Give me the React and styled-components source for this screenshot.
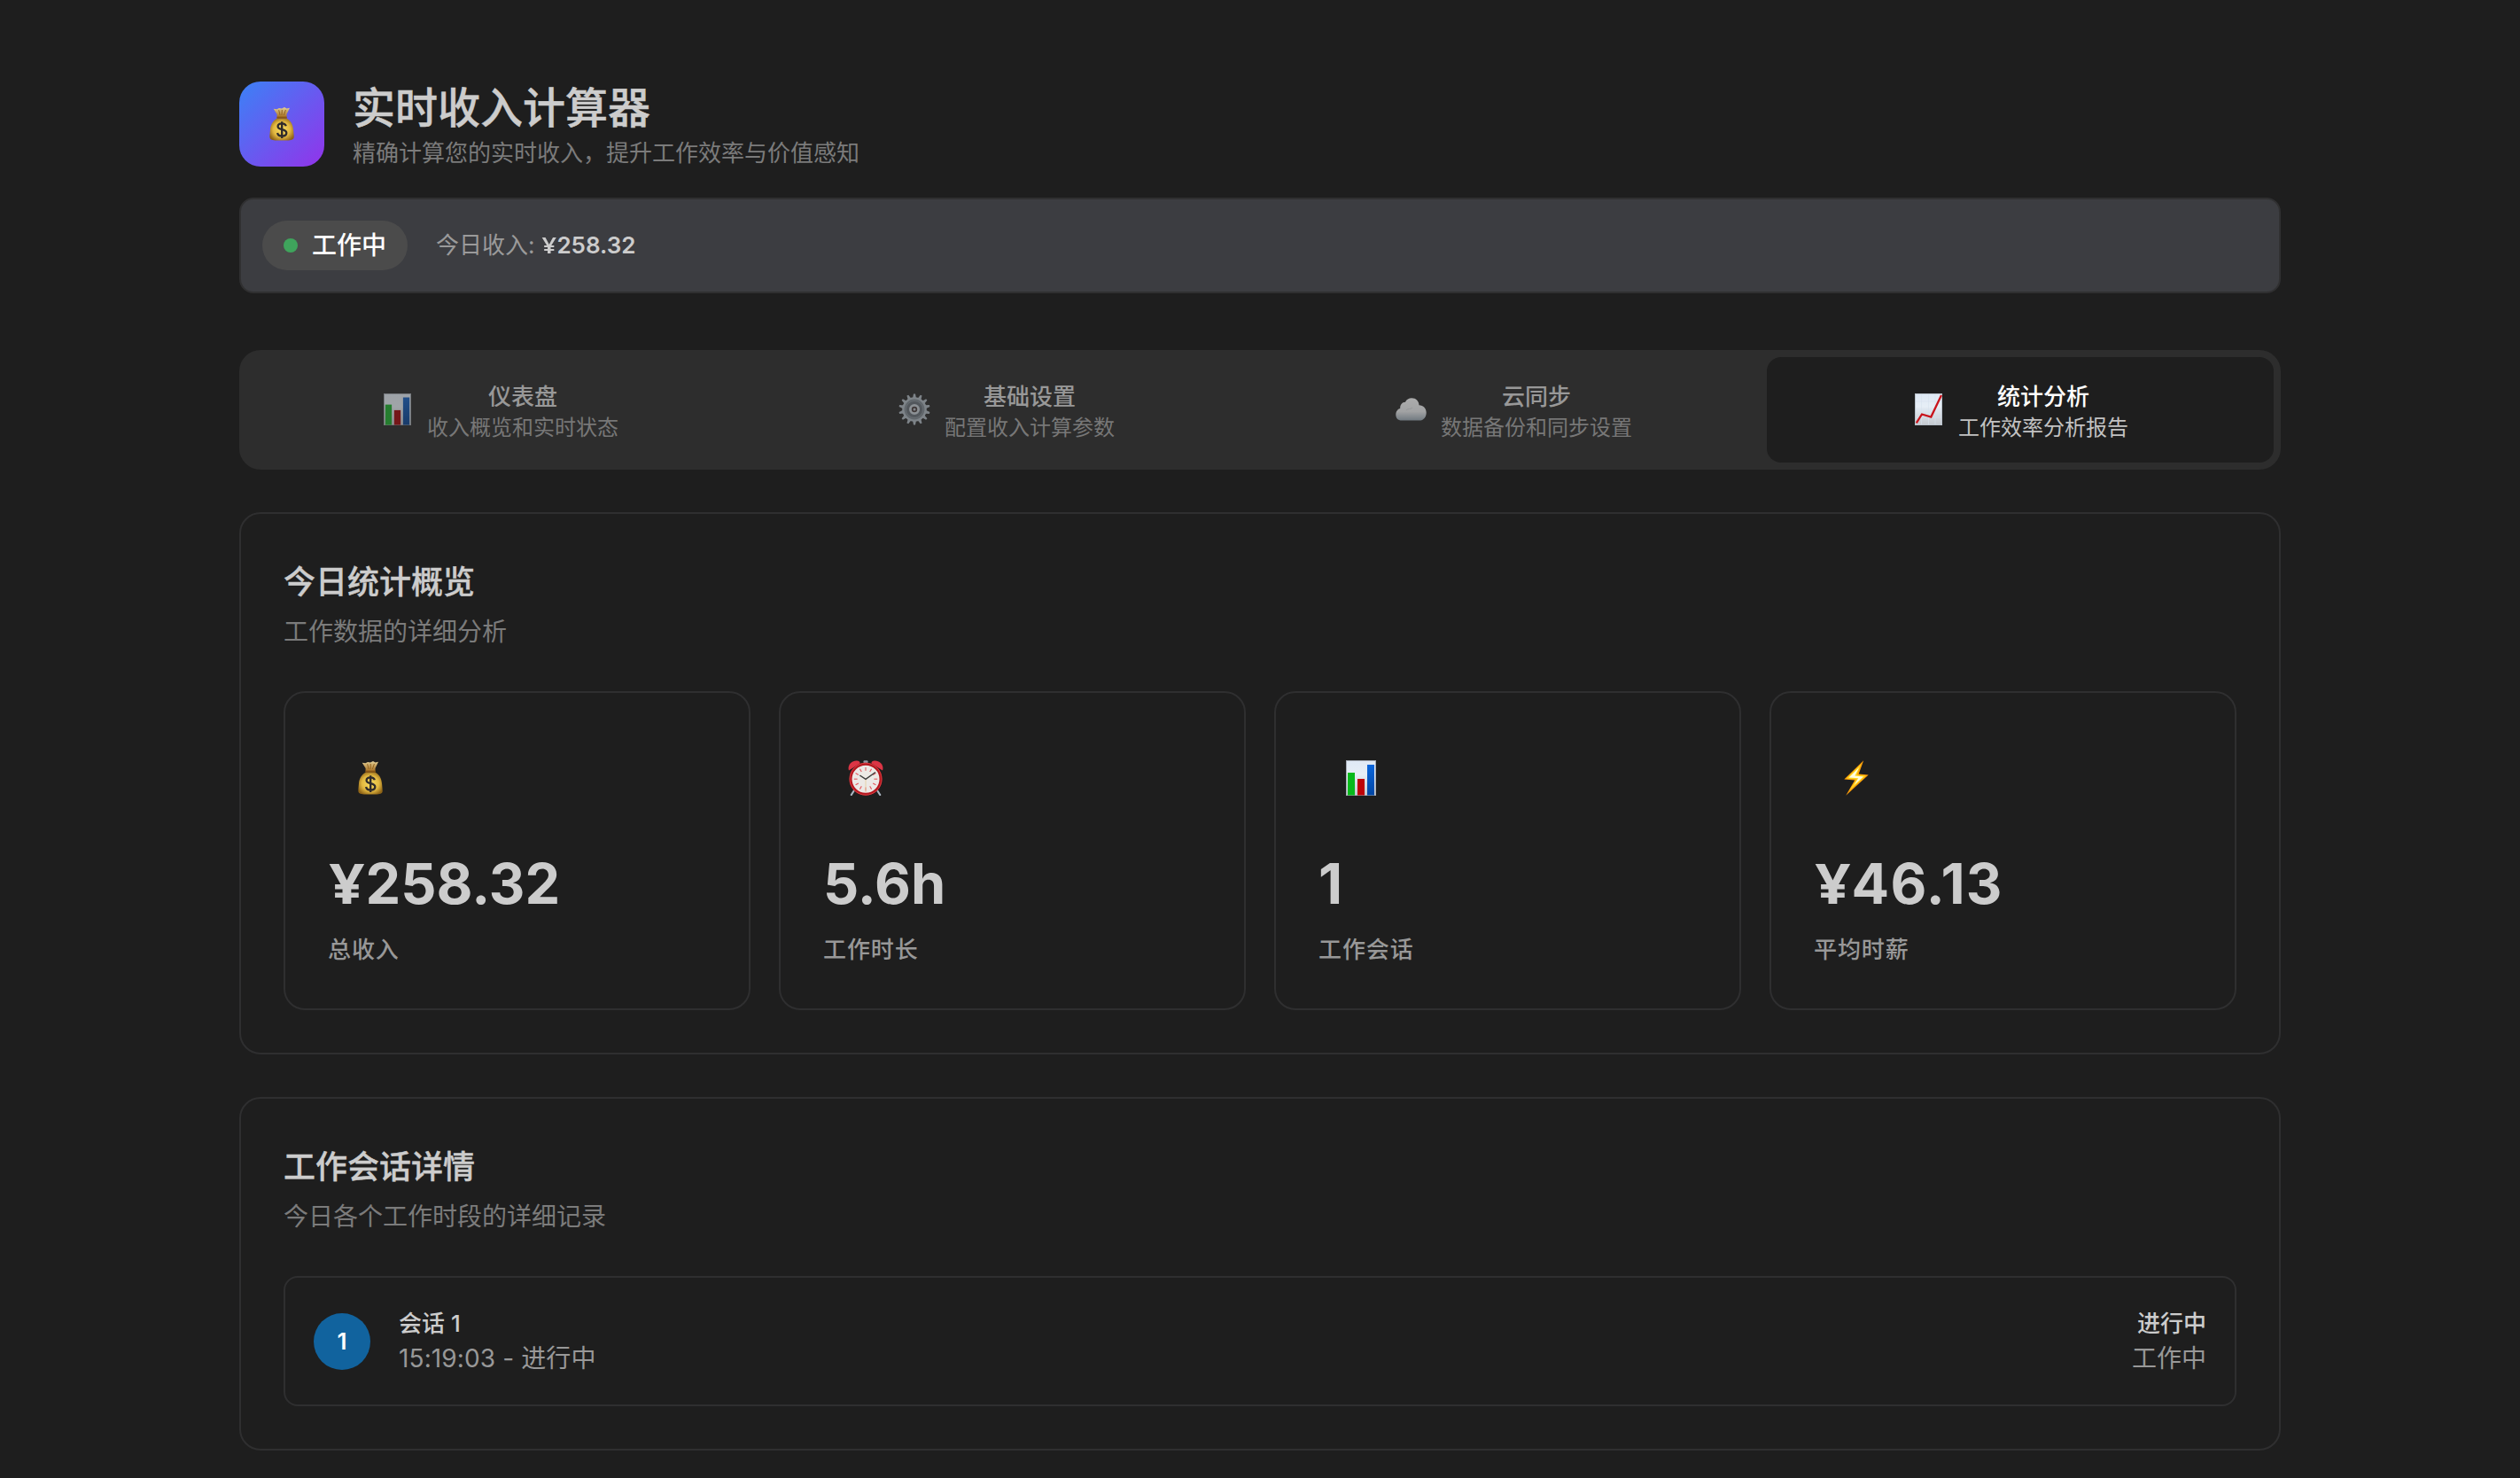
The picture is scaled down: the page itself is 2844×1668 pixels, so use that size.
import React from "react";
import styled, { createGlobalStyle } from "styled-components";

const GlobalStyle = createGlobalStyle`
  * { box-sizing: border-box; }
  body {
    margin: 0;
    background: #1e1e1e;
    color: #cccccc;
    font-family: Inter, "Noto Sans CJK SC", sans-serif;
    -webkit-font-smoothing: antialiased;
  }
  h1, h2, p { margin: 0; }
`;

const Page = styled.main`
  width: 2304px;
  height: 1668px;
  margin: 0 auto;
  padding-top: 92px;
  overflow: hidden;
`;

const Header = styled.header`
  display: flex;
  align-items: center;
  gap: 32px;
  height: 96px;
  margin-bottom: 35px;
`;

const Logo = styled.div`
  display: grid;
  place-items: center;
  width: 96px;
  height: 96px;
  border-radius: 24px;
  background: linear-gradient(135deg, #3b82f6, #9333ea);
`;

const Title = styled.h1`
  margin-top: 4px;
  font-size: 48px;
  line-height: 60px;
  font-weight: 500;
  -webkit-text-stroke: 0.5px #cccccc;
`;

const Tagline = styled.p`
  margin-top: 1px;
  font-size: 26px;
  line-height: 39px;
  color: #7b7b7b;
`;

const StatusBar = styled.section`
  display: flex;
  align-items: center;
  gap: 32px;
  height: 108px;
  padding: 0 24px;
  margin-bottom: 64px;
  border: 2px solid #303031;
  border-radius: 16px;
  background: #3c3d41;
`;

const StatusPill = styled.div`
  display: flex;
  align-items: center;
  gap: 16px;
  height: 56px;
  padding: 0 24px;
  border-radius: 28px;
  background: #4b4b4b;
  color: #ffffff;
`;

const StatusText = styled.span`
  padding-bottom: 1px;
  font-size: 28px;
  line-height: 40px;
  font-weight: 500;
`;

const Dot = styled.span`
  width: 16px;
  height: 16px;
  border-radius: 50%;
  background: #3fa45c;
`;

const Today = styled.div`
  padding-bottom: 1px;
  font-size: 26px;
  line-height: 40px;
  color: #9a9a9a;
  strong { color: #cccccc; font-weight: 600; }
`;

const Yen = styled.span`
  display: inline-block;
  width: 0.675em;
  padding-left: 0.02em;
  transform: scaleX(1.11);
  transform-origin: left;
  font-family: "Noto Sans", sans-serif;
  line-height: 1;
  letter-spacing: 0;
`;

const Tabs = styled.nav`
  display: grid;
  grid-template-columns: repeat(4, 1fr);
  height: 135px;
  padding: 8px;
  margin-bottom: 48px;
  border-radius: 24px;
  background: #2d2d2d;
`;

const Tab = styled.button`
  display: flex;
  align-items: center;
  justify-content: center;
  gap: 16px;
  padding: 0;
  border: 0;
  border-radius: 16px;
  font-family: inherit;
  background: ${(p) => (p.$active ? "#1e1e1e" : "transparent")};
  color: ${(p) => (p.$active ? "#ffffff" : "#989898")};
`;

const TabIcon = styled.span`
  display: grid;
  place-items: center;
  width: 36px;
  height: 36px;
  margin-bottom: 1px;
  opacity: ${(p) => (p.$active ? 1 : 0.62)};
  filter: ${(p) => (p.$active ? "none" : "grayscale(0.2)")};
`;

const TabText = styled.div`
  padding-top: 2px;
`;

const TabTitle = styled.div`
  font-size: 26px;
  line-height: 39px;
  font-weight: 500;
`;

const TabHint = styled.div`
  font-size: 24px;
  line-height: 32px;
  color: ${(p) => (p.$active ? "#c2c2c2" : "#777777")};
`;

const Panel = styled.section`
  height: ${(p) => p.$height}px;
  padding: 48px;
  margin-bottom: 48px;
  border: 2px solid #2f2f30;
  border-radius: 24px;
`;

const PanelTitle = styled.h2`
  padding-top: 1px;
  font-size: 36px;
  line-height: 56px;
  font-weight: 500;
  -webkit-text-stroke: 0.4px #cccccc;
`;

const PanelHint = styled.p`
  font-size: 28px;
  line-height: 42px;
  margin: 7px 0 46px;
  color: #7b7b7b;
`;

const Cards = styled.div`
  display: grid;
  grid-template-columns: repeat(4, 1fr);
  gap: 32px;
`;

const Card = styled.article`
  height: 360px;
  padding: 48px;
  border: 2px solid #2f2f30;
  border-radius: 24px;
`;

const CardIcon = styled.div`
  display: grid;
  place-items: center;
  width: 96px;
  height: 96px;
  margin-bottom: 31px;
`;

const Value = styled.div`
  height: 80px;
  font-size: 63px;
  line-height: 80px;
  font-weight: 700;
  letter-spacing: ${(p) => p.$tracking || 0}px;
`;

const Label = styled.div`
  margin-top: 15px;
  font-size: 26px;
  line-height: 39px;
  font-weight: 500;
  letter-spacing: 0.9px;
  color: #989898;
`;

const Session = styled.div`
  display: flex;
  align-items: center;
  gap: 32px;
  height: 147px;
  padding: 0 32px;
  border: 2px solid #2f2f30;
  border-radius: 16px;
`;

const Badge = styled.div`
  display: grid;
  place-items: center;
  width: 64px;
  height: 64px;
  border-radius: 50%;
  background: #11639e;
  color: #ffffff;
  font-size: 26px;
  font-weight: 600;
`;

const SessionText = styled.div`
  flex: ${(p) => (p.$end ? "none" : 1)};
  text-align: ${(p) => (p.$end ? "right" : "left")};
`;

const SessionMain = styled.div`
  font-size: 26px;
  line-height: 39px;
  font-weight: 500;
`;

const SessionSub = styled.div`
  font-size: 28px;
  line-height: 40px;
  letter-spacing: ${(p) => (p.$timed ? 0.12 : 0)}px;
  color: #989898;
`;

const MoneyBag = ({ id }) => (
  <svg width="28" height="38" viewBox="0 0 28 38">
    <defs>
      <radialGradient id={id + "b"} cx="50%" cy="50%" r="58%">
        <stop offset="0" stopColor="#f7dc62" />
        <stop offset="0.6" stopColor="#e2b840" />
        <stop offset="1" stopColor="#8f6417" />
      </radialGradient>
      <linearGradient id={id + "t"} x1="0" y1="0" x2="0" y2="1">
        <stop offset="0" stopColor="#e3cf96" />
        <stop offset="1" stopColor="#a36a1b" />
      </linearGradient>
    </defs>
    <path d="M4.7 1.8L8.4 2.2L11 .9L14 1.5L17 .1L19.6 1.6L23 .8L19.5 8V12H8.6V8Z" fill={`url(#${id}t)`} />
    <path d="M9 12.6C4 15 1.4 20 1 25C.7 29 .2 32 .4 34C.7 36.7 4 37.4 8 37.5H20C24.5 37.4 27.4 36.6 27.7 34C27.8 31.500 27.300 28 27 25C26.500 19.500 24 15 19.300 12.600Z" fill={`url(#${id}b)`} />
    <path d="M8.500 10.700H19.700V12.800H8.500Z" fill="#8a5716" />
    <path d="M10.700 3.200L12 9M14.300 3L14 9M18.400 3L16.400 9" stroke="#93641f" strokeWidth="1" fill="none" />
    <path d="M18.800 21.300C18.300 19.200 16.600 18.300 14.200 18.300C11.500 18.300 9.600 19.600 9.600 21.700C9.600 26.500 19.300 23.800 19.300 29C19.300 31.300 17.200 32.600 14.400 32.600C11.500 32.600 9.500 31.300 9.100 29M14.200 16.200V35" stroke="#2e2a2b" strokeWidth="2.300" fill="none" />
  </svg>
);

const BarChart = ({ width, height }) => (
  <svg width={width} height={height} viewBox="0 0 34 40" preserveAspectRatio="none">
    <defs>
      <linearGradient id="sheet" x1="0" y1="0" x2="0" y2="1">
        <stop offset="0" stopColor="#dfe9f5" />
        <stop offset="0.400" stopColor="#e6eef6" />
        <stop offset="1" stopColor="#c5c9cf" />
      </linearGradient>
      <linearGradient id="blue" x1="0" y1="0" x2="0" y2="1">
        <stop offset="0" stopColor="#0a66dc" />
        <stop offset="1" stopColor="#0046a4" />
      </linearGradient>
    </defs>
    <rect x="0.500" y="0.500" width="33" height="39" fill="url(#sheet)" stroke="#a5abb5" />
    <rect x="2" y="14" width="8" height="25.500" fill="#07b91b" />
    <rect x="13" y="21" width="8" height="18.500" fill="#bd0207" />
    <rect x="24" y="5" width="8" height="34.500" fill="url(#blue)" />
  </svg>
);

const TrendChart = () => (
  <svg width="31" height="36" viewBox="0 0 31 36">
    <rect x="0.500" y="0.500" width="30" height="35" fill="url(#sheet)" stroke="#b9c2cb" />
    <path d="M7.500 1V35M15.500 1V35M23 1V35M1 9H30M1 18H30M1 27H30" stroke="#d6e2ee" strokeWidth="0.600" />
    <path d="M1.800 33.300L8 23.500L18.300 26.500L30 2" stroke="#c9141c" strokeWidth="2.300" fill="none" />
  </svg>
);

const TEETH = Array.from({ length: 14 }, (_, i) => (i * 360) / 14);

const Gear = () => (
  <svg width="36" height="36" viewBox="0 0 36 36">
    {TEETH.map((a) => (
      <path key={a} d="M15.900 6L17 .4H19L20.100 6Z" fill="#adb9c4" transform={`rotate(${a} 18 18)`} />
    ))}
    <circle cx="18" cy="18" r="12.600" fill="#7d8893" stroke="#adb9c4" strokeWidth="2.400" />
    <circle cx="18" cy="18" r="9.600" fill="#67717b" stroke="#8f9ba6" strokeWidth="0.800" />
    <circle cx="18" cy="18" r="4.600" fill="#4c3f3e" stroke="#c3cdd6" strokeWidth="2.800" />
    <circle cx="18" cy="18" r="1.500" fill="#b3bcc5" />
  </svg>
);

const Cloud = () => (
  <svg width="35" height="26" viewBox="0 0 35 26">
    <defs>
      <linearGradient id="cloud" x1="0" y1="0" x2="0" y2="1">
        <stop offset="0" stopColor="#fafafa" />
        <stop offset="0.600" stopColor="#e9ebed" />
        <stop offset="1" stopColor="#98a9b8" />
      </linearGradient>
    </defs>
    <path d="M7 25.500C2.500 25.500 .3 22.600 .3 18.900C.3 15.200 2.400 12.600 5.200 11.900C4.900 8 7.300 4.700 11 4.700C12.200 1.900 15 .3 18.300 .3C23 .3 26.300 3.700 26.500 8.200C31.500 8.300 34.700 12 34.700 16.700C34.700 21.800 31.600 25.500 27 25.500Z" fill="url(#cloud)" />
    <path d="M12 14C14 11.500 17 13.500 19 11" stroke="#d3d8dc" strokeWidth="1" fill="none" />
  </svg>
);

const TICKS = Array.from({ length: 12 }, (_, i) => i * 30);

const AlarmClock = () => (
  <svg width="40" height="40" viewBox="0 0 40 40">
    <path d="M7 34L3.800 39M33 34L36.200 39" stroke="#a9b4c0" strokeWidth="2.200" strokeLinecap="round" />
    <rect x="17.500" y="0.200" width="5" height="3" rx="1" fill="#8d97a3" />
    <path d="M1 11.500C-1 6 4 .2 10 .6C12.400 .8 13.800 2 13.600 3.400Z" fill="#dc3545" />
    <path d="M39 11.500C41 6 36 .2 30 .6C27.600 .8 26.200 2 26.400 3.400Z" fill="#dc3545" />
    <circle cx="20" cy="21.200" r="17" fill="#ece9e6" stroke="#b5161e" strokeWidth="3" />
    <circle cx="20" cy="21.200" r="18" fill="none" stroke="#e0474d" strokeWidth="0.800" />
    {TICKS.map((a) => (
      <path key={a} d="M20 8V11.800" stroke="#e35a60" strokeWidth="1.100" transform={`rotate(${a} 20 21.200)`} />
    ))}
    <path d="M20 21.200V36" stroke="#e8cfa4" strokeWidth="0.900" />
    <path d="M13.300 17L20 21.400L31 13.500" stroke="#3c3c3c" strokeWidth="1.400" fill="none" />
  </svg>
);

const Bolt = () => (
  <svg width="28" height="40" viewBox="0 0 28 40">
    <path d="M22.200 .2L.3 21.600L12.200 22.600L2.200 39.700L27.700 16.400L16.700 15.500Z" fill="#fb9c0a" />
    <path d="M19.500 4.300L2.800 20.500L14.200 21.400L6 34.500L24.800 17.400L14.500 16.500Z" fill="#ffd61c" />
    <path d="M17 8.200L5.600 19.400L16.200 20.300L11.500 28L22 18.400L12.400 17.600Z" fill="#fffbe0" />
  </svg>
);

const tabs = [
  { title: "仪表盘", hint: "收入概览和实时状态", icon: <BarChart width={31} height={36} /> },
  { title: "基础设置", hint: "配置收入计算参数", icon: <Gear /> },
  { title: "云同步", hint: "数据备份和同步设置", icon: <Cloud /> },
  { title: "统计分析", hint: "工作效率分析报告", icon: <TrendChart />, active: true },
];

const stats = [
  { yen: true, value: "258.32", label: "总收入", icon: <MoneyBag id="income" /> },
  { value: "5.6h", label: "工作时长", icon: <AlarmClock /> },
  { value: "1", label: "工作会话", icon: <BarChart width={34} height={40} /> },
  { yen: true, value: "46.13", label: "平均时薪", icon: <Bolt />, tracking: 1.3 },
];

export default function App() {
  return (
    <>
      <GlobalStyle />
      <Page>
        <Header>
          <Logo><MoneyBag id="logo" /></Logo>
          <div>
            <Title>实时收入计算器</Title>
            <Tagline>精确计算您的实时收入，提升工作效率与价值感知</Tagline>
          </div>
        </Header>
        <StatusBar>
          <StatusPill><Dot /><StatusText>工作中</StatusText></StatusPill>
          <Today>今日收入: <strong><Yen>¥</Yen>258.32</strong></Today>
        </StatusBar>
        <Tabs>
          {tabs.map((t) => (
            <Tab key={t.title} $active={t.active}>
              <TabIcon $active={t.active}>{t.icon}</TabIcon>
              <TabText>
                <TabTitle>{t.title}</TabTitle>
                <TabHint $active={t.active}>{t.hint}</TabHint>
              </TabText>
            </Tab>
          ))}
        </Tabs>
        <Panel $height={612}>
          <PanelTitle>今日统计概览</PanelTitle>
          <PanelHint>工作数据的详细分析</PanelHint>
          <Cards>
            {stats.map((s) => (
              <Card key={s.label}>
                <CardIcon>{s.icon}</CardIcon>
                <Value $tracking={s.tracking}>{s.yen && <Yen>¥</Yen>}{s.value}</Value>
                <Label>{s.label}</Label>
              </Card>
            ))}
          </Cards>
        </Panel>
        <Panel $height={399}>
          <PanelTitle>工作会话详情</PanelTitle>
          <PanelHint>今日各个工作时段的详细记录</PanelHint>
          <Session>
            <Badge>1</Badge>
            <SessionText>
              <SessionMain>会话 1</SessionMain>
              <SessionSub $timed>15:19:03 - 进行中</SessionSub>
            </SessionText>
            <SessionText $end>
              <SessionMain>进行中</SessionMain>
              <SessionSub>工作中</SessionSub>
            </SessionText>
          </Session>
        </Panel>
      </Page>
    </>
  );
}
